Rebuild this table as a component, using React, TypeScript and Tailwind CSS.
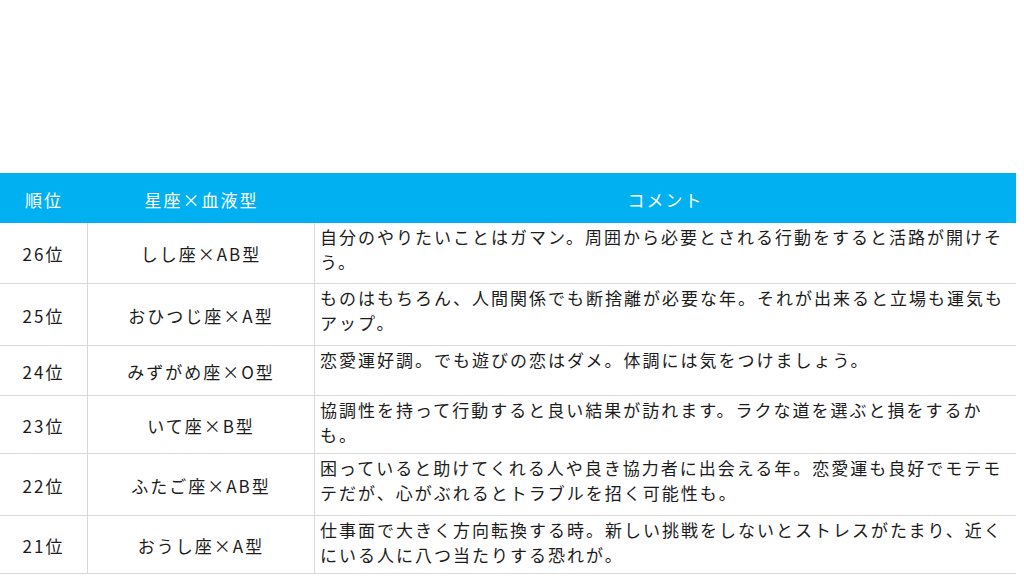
import React from "react";

type Row = { rank: string; sign: string; lines: string[]; h: string };

const rows: Row[] = [
  { rank: "26位", sign: "しし座×AB型", lines: ["自分のやりたいことはガマン。周囲から必要とされる行動をすると活路が開けそ", "う。"], h: "h-[61px]" },
  { rank: "25位", sign: "おひつじ座×A型", lines: ["ものはもちろん、人間関係でも断捨離が必要な年。それが出来ると立場も運気も", "アップ。"], h: "h-[62px]" },
  { rank: "24位", sign: "みずがめ座×O型", lines: ["恋愛運好調。でも遊びの恋はダメ。体調には気をつけましょう。"], h: "h-[50px]" },
  { rank: "23位", sign: "いて座×B型", lines: ["協調性を持って行動すると良い結果が訪れます。ラクな道を選ぶと損をするか", "も。"], h: "h-[58px]" },
  { rank: "22位", sign: "ふたご座×AB型", lines: ["困っていると助けてくれる人や良き協力者に出会える年。恋愛運も良好でモテモ", "テだが、心がぶれるとトラブルを招く可能性も。"], h: "h-[62px]" },
  { rank: "21位", sign: "おうし座×A型", lines: ["仕事面で大きく方向転換する時。新しい挑戦をしないとストレスがたまり、近く", "にいる人に八つ当たりする恐れが。"], h: "h-[58px]" },
];

export default function App() {
  return (
    <div
      lang="ja"
      className="w-[1024px] h-[576px] overflow-hidden bg-white pt-[173px] text-[17px] tracking-[2px] text-[#1c1c1c]"
      style={{ fontFamily: '"Noto Sans CJK JP", "Noto Sans", sans-serif' }}
    >
      <div className="w-[1016px]">
        <div className="flex h-[50px] bg-[#00b0f0] text-white items-center pt-[3px]">
          <div className="w-[88px] text-center">順位</div>
          <div className="w-[227px] text-center">星座×血液型</div>
          <div className="flex-1 text-center">コメント</div>
        </div>
        {rows.map((r) => (
          <div key={r.rank} className={`flex ${r.h} border-b border-[#d9d9d9]`}>
            <div className="w-[88px] border-r border-[#d9d9d9] flex items-center justify-center pt-[2px]">{r.rank}</div>
            <div className="w-[227px] border-r border-[#d9d9d9] flex items-center justify-center pt-[2px]">{r.sign}</div>
            <div className="flex-1 pl-[5px] pt-[1px] leading-[25px] whitespace-nowrap">
              {r.lines.map((l, i) => (
                <div key={i}>{l}</div>
              ))}
            </div>
          </div>
        ))}
      </div>
    </div>
  );
}
